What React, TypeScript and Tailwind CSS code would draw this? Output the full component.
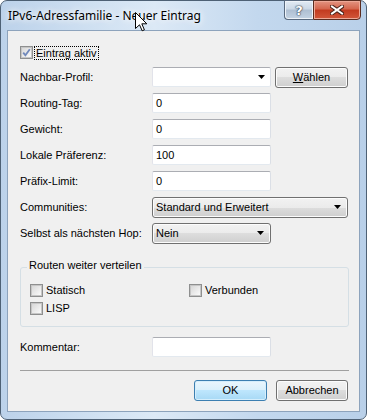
import React from "react";

const arrow = (
  <svg width="7" height="4" viewBox="0 0 7 4">
    <path d="M0 0h7L3.5 4z" fill="#000" />
  </svg>
);

function Box({ checked }: { checked?: boolean }) {
  return (
    <span className="flex h-[13px] w-[13px] shrink-0 items-center justify-center border border-[#8e8f8f] bg-[#f4f4f4]">
      <span className="relative flex h-[11px] w-[11px] items-center justify-center border border-[#c6c6c6] bg-[linear-gradient(135deg,#d8d8d8,#fafafa)]">
        {checked && (
          <svg width="9" height="9" viewBox="0 0 9 9" className="absolute">
            <path d="M1.2 4.6 L3.4 7.2 L7.8 1.2" fill="none" stroke="#7189bb" strokeWidth="1.8" />
          </svg>
        )}
      </span>
    </span>
  );
}

const Row = ({ label, children }: { label: string; children: React.ReactNode }) => (
  <div className="flex h-[20px] items-center">
    <span className="w-[132px]">{label}</span>
    {children}
  </div>
);

const TextBox = ({ value = "" }: { value?: string }) => (
  <div className="flex h-[20px] w-[119px] items-center rounded-[2px] border border-[#abadb3] border-b-[#e3e9ef] border-l-[#e2e3ea] border-r-[#dbdfe6] bg-white pl-[3px]">
    {value}
  </div>
);

const ComboBtn = ({ value, w }: { value: string; w: string }) => (
  <div
    className={`flex h-[21px] items-center justify-between rounded-[3px] border border-[#707070] bg-[linear-gradient(180deg,#f2f2f2_0%,#ebebeb_50%,#dddddd_50%,#cfcfcf_100%)] pl-[3px] pr-[6px] shadow-[inset_0_0_0_1px_#fcfcfc] ${w}`}
  >
    <span>{value}</span>
    {arrow}
  </div>
);

const btnGray =
  "flex h-[21px] items-center justify-center rounded-[3px] border border-[#707070] bg-[linear-gradient(180deg,#f2f2f2_0%,#ebebeb_50%,#dddddd_50%,#cfcfcf_100%)] shadow-[inset_0_0_0_1px_#fcfcfc]";

export default function App() {
  return (
    <div className="relative h-[420px] w-[367px] font-['Liberation_Sans',Arial,sans-serif] text-[11px] leading-[13px] text-black">
      <div className="flex h-full flex-col rounded-[7px] border border-[#4e6175] bg-[linear-gradient(90deg,#bcd2ea_0%,#d3e3f3_30%,#dce9f6_42%,#c3d8ee_70%,#b9d0e9_100%)] px-[6px] pb-[7px]">
        {/* title bar */}
        <div className="flex h-[29px] shrink-0 items-start justify-between">
          <span className="ml-px mt-[7px] font-['Noto_Sans',sans-serif] text-[12px] leading-[16px] [text-shadow:0_0_6px_#fff,0_0_10px_#fff]">
            IPv6-Adressfamilie - Neuer Eintrag
          </span>
          <div className="-mt-px mr-[-1px] flex">
            <div className="flex h-[20px] w-[29px] items-center justify-center rounded-bl-[4px] border border-r-0 border-[#58697e] bg-[linear-gradient(180deg,#e2ebf4_0%,#cbd8e6_45%,#aebfd2_50%,#c4d3e3_100%)] shadow-[inset_0_0_0_1px_#eef3f9]">
              <span className="font-['DejaVu_Sans',sans-serif] text-[13px] font-bold leading-none text-white [text-shadow:0_0_1px_#3a4656,0_0_1px_#3a4656,0_0_2px_#3a4656]">
                ?
              </span>
            </div>
            <div className="flex h-[20px] w-[48px] items-center justify-center rounded-br-[4px] border border-[#5b2c20] bg-[linear-gradient(180deg,#e39482_0%,#d4654c_45%,#c23a1f_50%,#d2573a_100%)] shadow-[inset_0_0_0_1px_#eda896]">
              <svg width="14" height="10" viewBox="0 0 14 10">
                <path d="M2 1.5 L12 8.5 M12 1.5 L2 8.5" stroke="#4a2219" strokeWidth="4" strokeLinecap="square" />
                <path d="M2 1.5 L12 8.5 M12 1.5 L2 8.5" stroke="#fff" strokeWidth="2" strokeLinecap="square" />
              </svg>
            </div>
          </div>
        </div>

        {/* client area */}
        <div className="flex flex-1 flex-col border border-[#8da3bc] bg-[#f0f0f0] pl-[12px] pt-[15px]">
          <div className="flex h-[13px] items-center">
            <Box checked />
            <span className="ml-px border border-dotted border-black px-px leading-[12px]">Eintrag aktiv</span>
          </div>

          <div className="mt-[8px] flex flex-col gap-[6px]">
            <Row label="Nachbar-Profil:">
              <div className="flex h-[20px] w-[119px] items-center justify-end rounded-[2px] border border-[#abadb3] border-b-[#e3e9ef] border-l-[#e2e3ea] border-r-[#dbdfe6] bg-white pr-[5px]">
                {arrow}
              </div>
              <div className={`${btnGray} ml-[4px] h-[19px] w-[73px]`}>
                <span>
                  <span className="underline">W</span>ählen
                </span>
              </div>
            </Row>
            <Row label="Routing-Tag:">
              <TextBox value="0" />
            </Row>
            <Row label="Gewicht:">
              <TextBox value="0" />
            </Row>
            <Row label="Lokale Präferenz:">
              <TextBox value="100" />
            </Row>
            <Row label="Präfix-Limit:">
              <TextBox value="0" />
            </Row>
            <Row label="Communities:">
              <ComboBtn value="Standard und Erweitert" w="w-[196px]" />
            </Row>
            <Row label="Selbst als nächsten Hop:">
              <ComboBtn value="Nein" w="w-[119px]" />
            </Row>
          </div>

          {/* group box */}
          <div className="relative mt-[24px] h-[60px] w-[329px] rounded-[3px] border border-[#d5dfe5] pl-[9px] pt-[16px]">
            <span className="absolute -top-[9px] left-[6px] bg-[#f0f0f0] px-[2px]">Routen weiter verteilen</span>
            <div className="flex h-[13px] items-center">
              <div className="flex w-[159px] items-center gap-[3px]">
                <Box />
                <span>Statisch</span>
              </div>
              <div className="flex items-center gap-[3px]">
                <Box />
                <span>Verbunden</span>
              </div>
            </div>
            <div className="mt-[5px] flex h-[13px] items-center gap-[3px]">
              <Box />
              <span>LISP</span>
            </div>
          </div>

          <div className="mt-[10px]">
            <Row label="Kommentar:">
              <TextBox />
            </Row>
          </div>

          <div className="mt-[13px] h-px w-[329px] bg-[#a0a0a0]" />

          <div className="mt-[9px] flex w-[328px] justify-end gap-[9px]">
            <div className="flex h-[21px] w-[73px] items-center justify-center rounded-[3px] border border-[#3c7fb1] bg-[linear-gradient(180deg,#eaf6fd_0%,#d9f0fc_50%,#bee6fd_50%,#a7d9f5_100%)] shadow-[inset_0_0_0_1px_#d5eefc]">
              OK
            </div>
            <div className={`${btnGray} w-[72px]`}>Abbrechen</div>
          </div>
        </div>
      </div>

      {/* mouse cursor */}
      <svg className="absolute left-[135px] top-[12px]" width="13" height="20" viewBox="0 0 13 20">
        <path d="M0.5 0.5 L0.5 16.5 L4.5 12.8 L7.2 18.8 L9.4 17.8 L6.8 11.8 L11.8 11.8 Z" fill="#fff" stroke="#000" strokeWidth="1" />
      </svg>
    </div>
  );
}
